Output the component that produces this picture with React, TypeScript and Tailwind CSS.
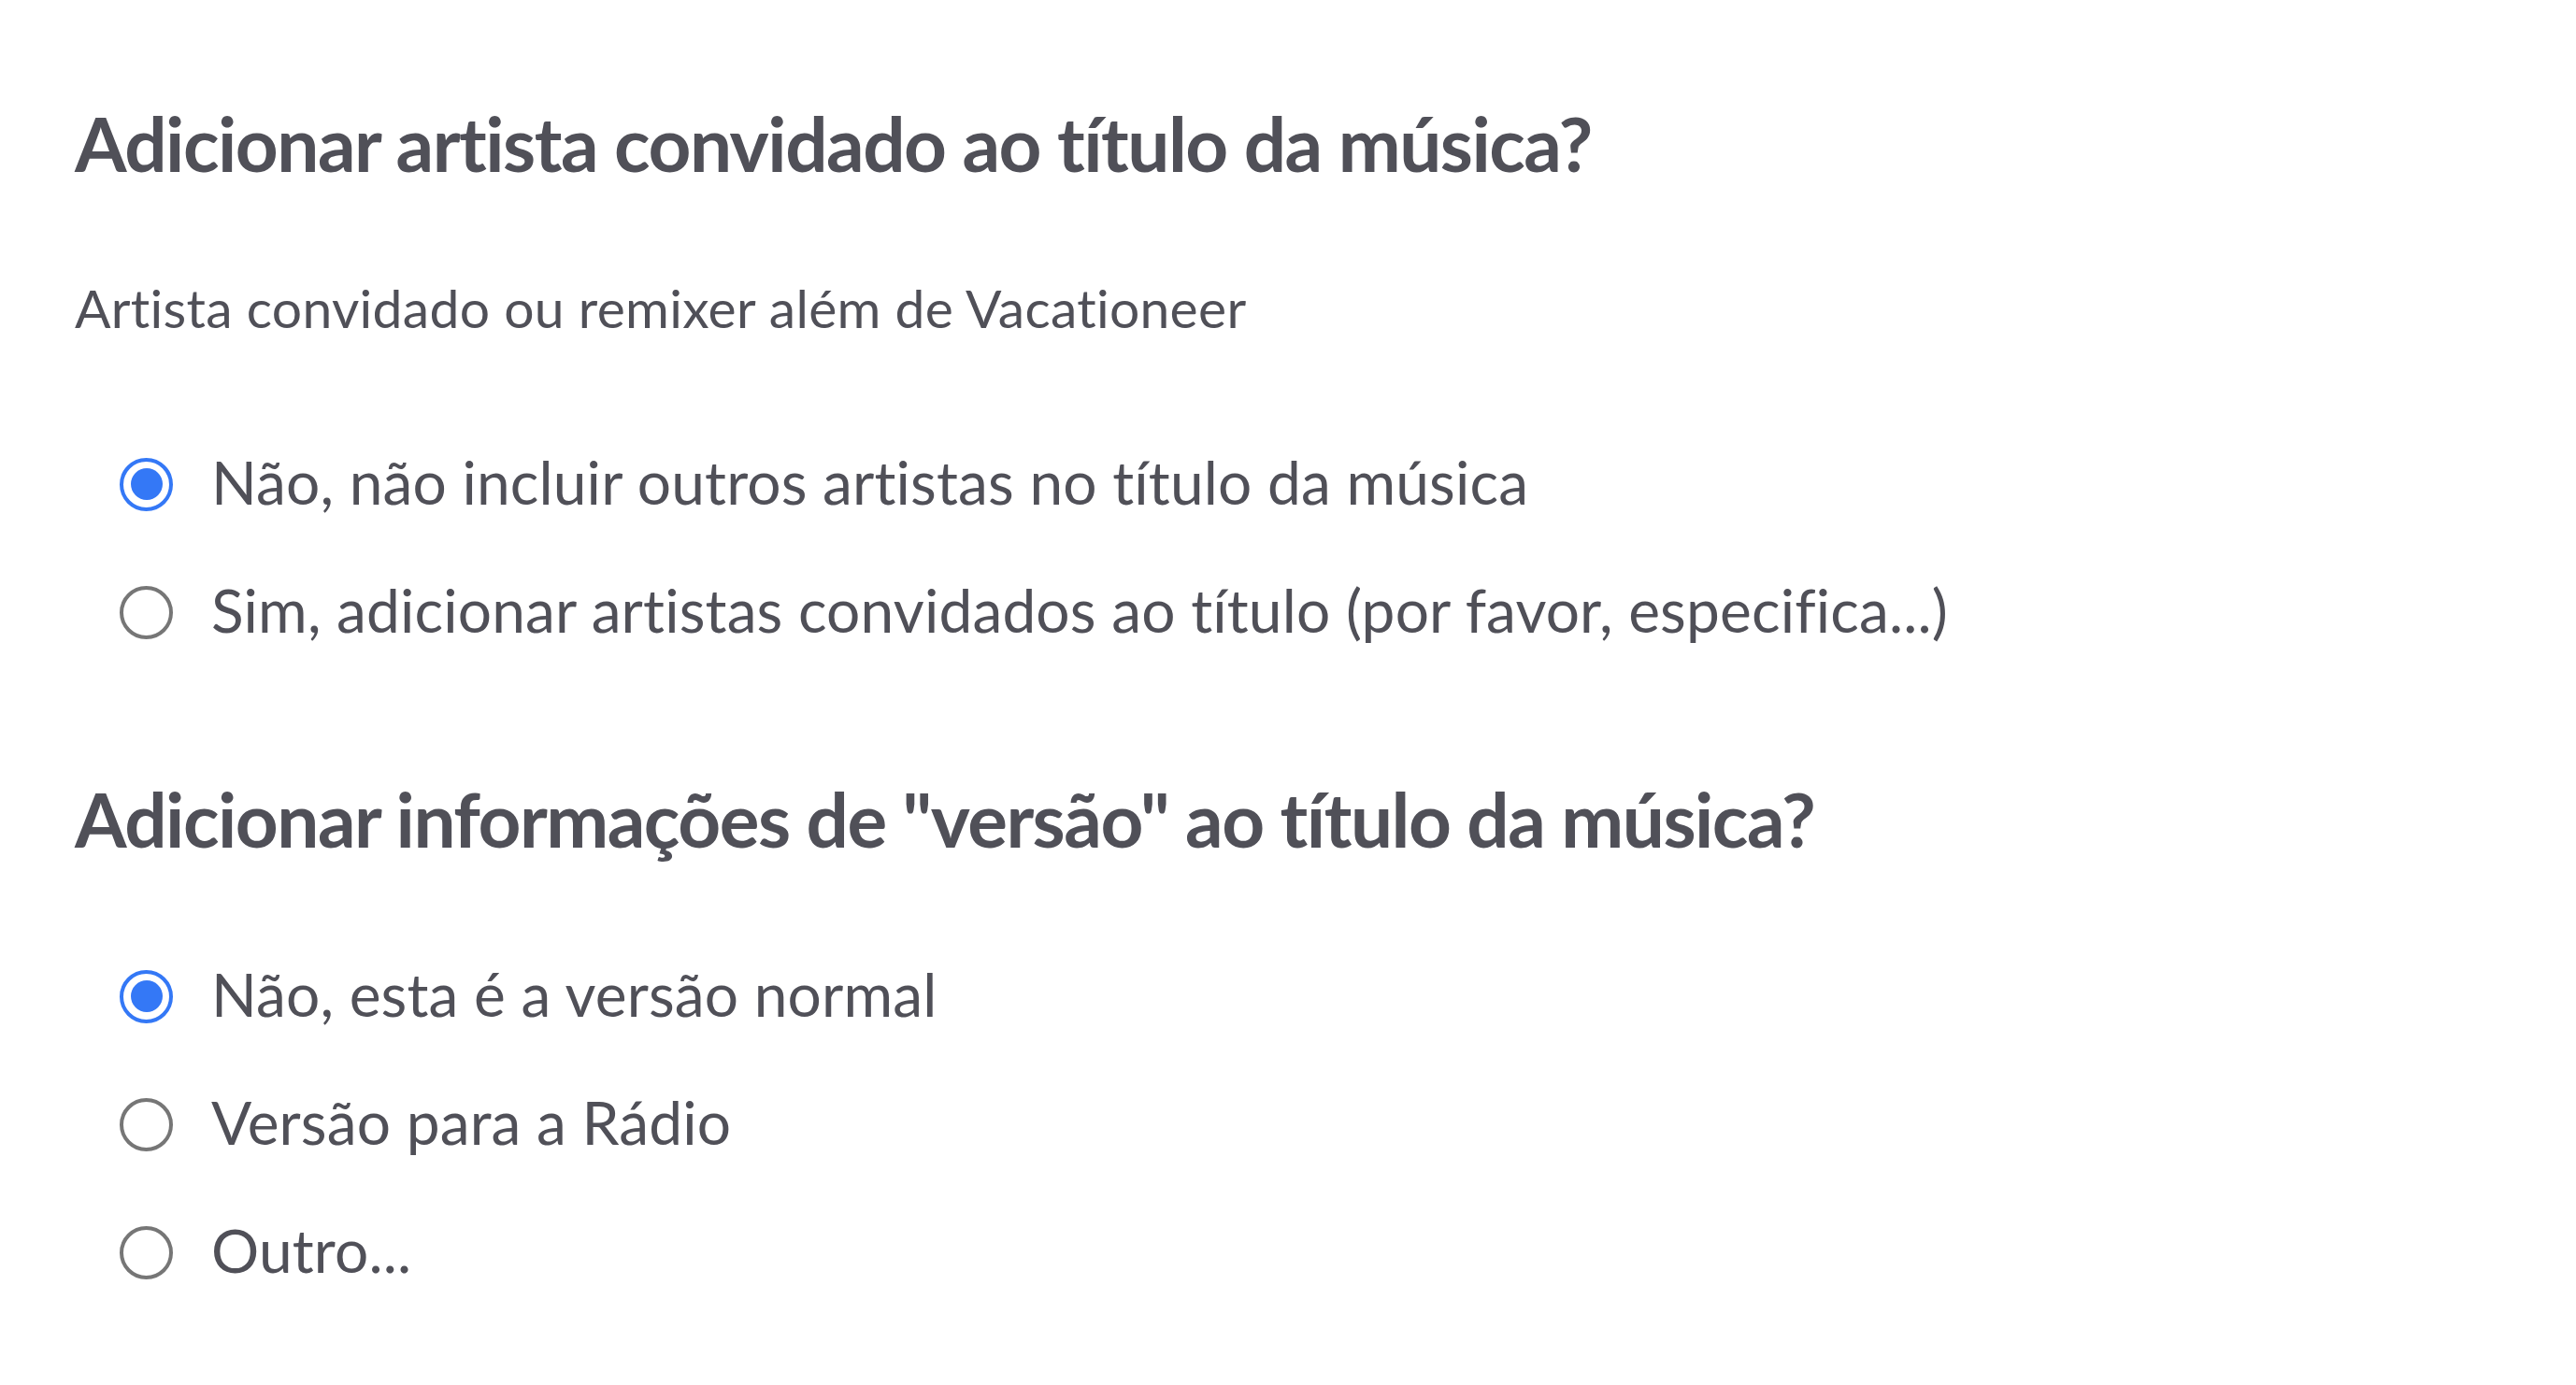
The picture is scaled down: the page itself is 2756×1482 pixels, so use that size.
import { useState } from "react";

type Option = { id: string; label: string };

const guestOptions: Option[] = [
  { id: "no-guests", label: "Não, não incluir outros artistas no título da música" },
  { id: "add-guests", label: "Sim, adicionar artistas convidados ao título (por favor, especifica...)" },
];

const versionOptions: Option[] = [
  { id: "normal", label: "Não, esta é a versão normal" },
  { id: "radio", label: "Versão para a Rádio" },
  { id: "other", label: "Outro..." },
];

const Radio = ({ checked }: { checked: boolean }) => (
  <span
    className={
      checked
        ? "mt-[5px] flex h-[57px] w-[57px] shrink-0 items-center justify-center rounded-full border-[4px] border-[#3478f6] bg-white"
        : "mt-[5px] flex h-[57px] w-[57px] shrink-0 items-center justify-center rounded-full border-[4px] border-[#767676] bg-white"
    }
  >
    {checked && <span className="h-[34px] w-[34px] rounded-full bg-[#3478f6]" />}
  </span>
);

const RadioGroup = ({ options, value, onChange }: { options: Option[]; value: string; onChange: (v: string) => void }) => (
  <div className="flex flex-col gap-[60px] pl-[48px]">
    {options.map((o) => (
      <label key={o.id} className="flex cursor-pointer items-center gap-[41px]" onClick={() => onChange(o.id)}>
        <Radio checked={value === o.id} />
        <span className="whitespace-nowrap text-[64px] leading-[77px] tracking-[0.15px]">{o.label}</span>
      </label>
    ))}
  </div>
);

export default function App() {
  const [guests, setGuests] = useState("no-guests");
  const [version, setVersion] = useState("normal");

  return (
    <div
      className="min-h-screen bg-white pl-[80px] pt-[105px] text-[#505058] [font-variant-ligatures:none]"
      style={{ fontFamily: "Lato, 'Noto Sans', sans-serif" }}
    >
      {/* Guest artist */}
      <h2 className="text-[80px] font-bold leading-[96px] tracking-[-1.5px]">
        Adicionar artista convidado ao título da música?
      </h2>
      <p className="mt-[95px] text-[57px] leading-[67px] tracking-[0.3px]">
        Artista convidado ou remixer além de Vacationeer
      </p>
      <div className="mt-[114px]">
        <RadioGroup options={guestOptions} value={guests} onChange={setGuests} />
      </div>

      {/* Version info */}
      <h2 className="mt-[137px] text-[80px] font-bold leading-[96px] tracking-[-1.5px]">
        Adicionar informações de "versão" ao título da música?
      </h2>
      <div className="mt-[101px]">
        <RadioGroup options={versionOptions} value={version} onChange={setVersion} />
      </div>
    </div>
  );
}
